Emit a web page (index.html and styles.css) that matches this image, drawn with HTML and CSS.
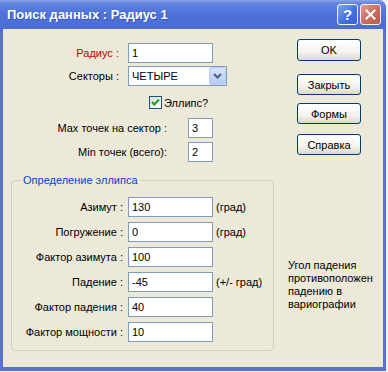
FILE: index.html
```html
<!DOCTYPE html>
<html lang="ru">
<head>
    <meta charset="UTF-8">
    <title>Поиск данных : Радиус 1</title>
    <link rel="stylesheet" href="styles.css">
</head>
<body>
    <div class="window">
        <!-- Title bar -->
        <div class="titlebar">
            <span class="title">Поиск данных : Радиус 1</span>
            <div class="caption-buttons">
                <span class="cap-btn help">?</span>
                <span class="cap-btn close">
                    <svg width="11" height="11" viewBox="0 0 11 11">
                        <path d="M1.5 1.5 L9.5 9.5 M9.5 1.5 L1.5 9.5" stroke="#fff" stroke-width="2" stroke-linecap="square"/>
                    </svg>
                </span>
            </div>
        </div>

        <div class="client">
            <div class="top">
                <div class="fields">
                    <div class="row">
                        <label class="lbl lbl-main red">Радиус :</label>
                        <input class="field w85" type="text" value="1">
                    </div>
                    <div class="row">
                        <label class="lbl lbl-main">Секторы :</label>
                        <div class="combo">
                            <span class="combo-text">ЧЕТЫРЕ</span>
                            <span class="combo-btn">
                                <svg width="9" height="6" viewBox="0 0 9 6">
                                    <path d="M1 1 L4.5 4.5 L8 1" fill="none" stroke="#4d6185" stroke-width="2"/>
                                </svg>
                            </span>
                        </div>
                    </div>
                    <div class="check-row">
                        <span class="checkbox">
                            <svg width="11" height="11" viewBox="0 0 11 11">
                                <path d="M2 5 L4.3 7.5 L9 2.5" fill="none" stroke="#21a121" stroke-width="2.2"/>
                            </svg>
                        </span>
                        <span>Эллипс?</span>
                    </div>
                    <div class="row row-points">
                        <label class="lbl lbl-points">Max точек на сектор :</label>
                        <input class="field w25" type="text" value="3">
                    </div>
                    <div class="row row-points second">
                        <label class="lbl lbl-points">Min точек (всего):</label>
                        <input class="field w25" type="text" value="2">
                    </div>
                </div>

                <div class="buttons">
                    <button class="btn btn-ok">OK</button>
                    <button class="btn btn-close">Закрыть</button>
                    <button class="btn btn-forms">Формы</button>
                    <button class="btn btn-help">Справка</button>
                </div>
            </div>

            <div class="bottom">
                <!-- Ellipse group -->
                <fieldset class="group">
                    <legend>Определение эллипса</legend>
                    <div class="row">
                        <label class="lbl lbl-group">Азимут :</label>
                        <input class="field w85" type="text" value="130">
                        <span class="unit">(град)</span>
                    </div>
                    <div class="row">
                        <label class="lbl lbl-group">Погружение :</label>
                        <input class="field w85" type="text" value="0">
                        <span class="unit">(град)</span>
                    </div>
                    <div class="row">
                        <label class="lbl lbl-group">Фактор азимута :</label>
                        <input class="field w85" type="text" value="100">
                    </div>
                    <div class="row">
                        <label class="lbl lbl-group">Падение :</label>
                        <input class="field w85" type="text" value="-45">
                        <span class="unit">(+/- град)</span>
                    </div>
                    <div class="row">
                        <label class="lbl lbl-group">Фактор падения :</label>
                        <input class="field w85" type="text" value="40">
                    </div>
                    <div class="row">
                        <label class="lbl lbl-group">Фактор мощности :</label>
                        <input class="field w85" type="text" value="10">
                    </div>
                </fieldset>

                <p class="note">Угол падения<br>противоположен<br>падению в<br>вариографии</p>
            </div>
        </div>
    </div>
</body>
</html>
```

FILE: styles.css
```css
* {
    margin: 0;
    padding: 0;
    box-sizing: border-box;
}

body {
    background-color: #f3f2ec;
    font-family: "Liberation Sans", Arial, sans-serif;
    font-size: 11px;
    color: #000;
}

.window {
    width: 386px;
    height: 371px;
    display: flex;
    flex-direction: column;
    background-color: #5a6fd2;
    border-radius: 0 8px 0 0;
}

/* Title bar */
.titlebar {
    height: 29px;
    display: flex;
    align-items: center;
    justify-content: space-between;
    padding: 0 5px 0 7px;
    background: linear-gradient(#8aa5ea 0, #6585e0 3px, #4f74da 12px, #4a6cd6 100%);
    border-radius: 0 8px 0 0;
}

.title {
    color: #fff;
    font-weight: bold;
    font-size: 13px;
    text-shadow: 1px 1px 0 #3a55b0;
}

.caption-buttons {
    display: flex;
    gap: 2px;
    margin-top: -1px;
}

.cap-btn {
    width: 21px;
    height: 21px;
    border: 1px solid #f2f4fc;
    border-radius: 3px;
    display: flex;
    align-items: center;
    justify-content: center;
}

.help {
    background: linear-gradient(135deg, #7fa6f4, #3e6fe2 60%, #3563d8);
    color: #fff;
    font-weight: bold;
    font-size: 15px;
}

.close {
    background: linear-gradient(135deg, #e0998c, #c8695c 60%, #bb5a4e);
}

/* Client area */
.client {
    flex: 1;
    margin: 0 3px 4px 3px;
    background-color: #ece9d8;
    display: flex;
    flex-direction: column;
}

.top {
    display: grid;
    grid-template-columns: 294px 64px;
    padding-top: 10px;
}

.fields {
    padding-top: 4px;
}

.row {
    display: flex;
    align-items: center;
    height: 20px;
    margin-bottom: 3px;
}

.lbl {
    text-align: right;
    flex-shrink: 0;
}

.lbl-main {
    width: 116px;
    margin-right: 9px;
}

.lbl-points {
    width: 164px;
    margin-right: 21px;
}

.lbl-group {
    width: 111px;
    margin-right: 5px;
}

.red {
    color: #c40000;
}

.field {
    height: 20px;
    border: 1px solid #7f9db9;
    background-color: #fff;
    padding: 0 3px;
    font-family: "Liberation Sans", Arial, sans-serif;
    font-size: 11px;
    color: #000;
    outline: none;
}

.w85 {
    width: 85px;
}

.w25 {
    width: 25px;
}

.combo {
    width: 99px;
    height: 20px;
    border: 1px solid #7f9db9;
    background-color: #fff;
    display: flex;
    align-items: center;
    justify-content: space-between;
    padding: 0 0 0 3px;
}

.combo-btn {
    width: 17px;
    height: 18px;
    border: 1px solid #bccdf6;
    border-radius: 2px;
    background: linear-gradient(#d8e3fc, #b8cbf7);
    display: flex;
    align-items: center;
    justify-content: center;
}

.check-row {
    display: flex;
    align-items: center;
    gap: 2px;
    height: 13px;
    margin: 10px 0 9px 146px;
}

.checkbox {
    width: 13px;
    height: 13px;
    border: 1px solid #1c5180;
    background: linear-gradient(135deg, #dcdcd7, #fff);
    display: flex;
    align-items: center;
    justify-content: center;
}

.row-points {
    margin-bottom: 4px;
}

.row-points.second {
    margin-bottom: 0;
}

/* Right buttons */
.buttons {
    display: flex;
    flex-direction: column;
}

.btn {
    width: 64px;
    height: 21px;
    border: 1px solid #003c74;
    border-radius: 3px;
    background: linear-gradient(#ffffff, #f4f3ee 60%, #dcd8cb);
    font-family: "Liberation Sans", Arial, sans-serif;
    font-size: 11px;
    color: #000;
}

.btn-ok {
    height: 22px;
}

.btn-close {
    margin-top: 13px;
}

.btn-forms {
    margin-top: 8px;
}

.btn-help {
    margin-top: 10px;
}

/* Ellipse group */
.bottom {
    display: flex;
    align-items: flex-start;
    margin: 12px 0 0 8px;
}

.group {
    width: 263px;
    border: 1px solid #d0d0bf;
    border-radius: 4px;
    padding: 10px 0 3px 0;
}

.group legend {
    margin-left: 9px;
    padding: 0 2px;
    line-height: 13px;
    color: #0046d5;
}

.group .row {
    margin-bottom: 5px;
}

.unit {
    margin-left: 3px;
}

.note {
    margin: 85px 0 0 14px;
    line-height: 13px;
}
```
